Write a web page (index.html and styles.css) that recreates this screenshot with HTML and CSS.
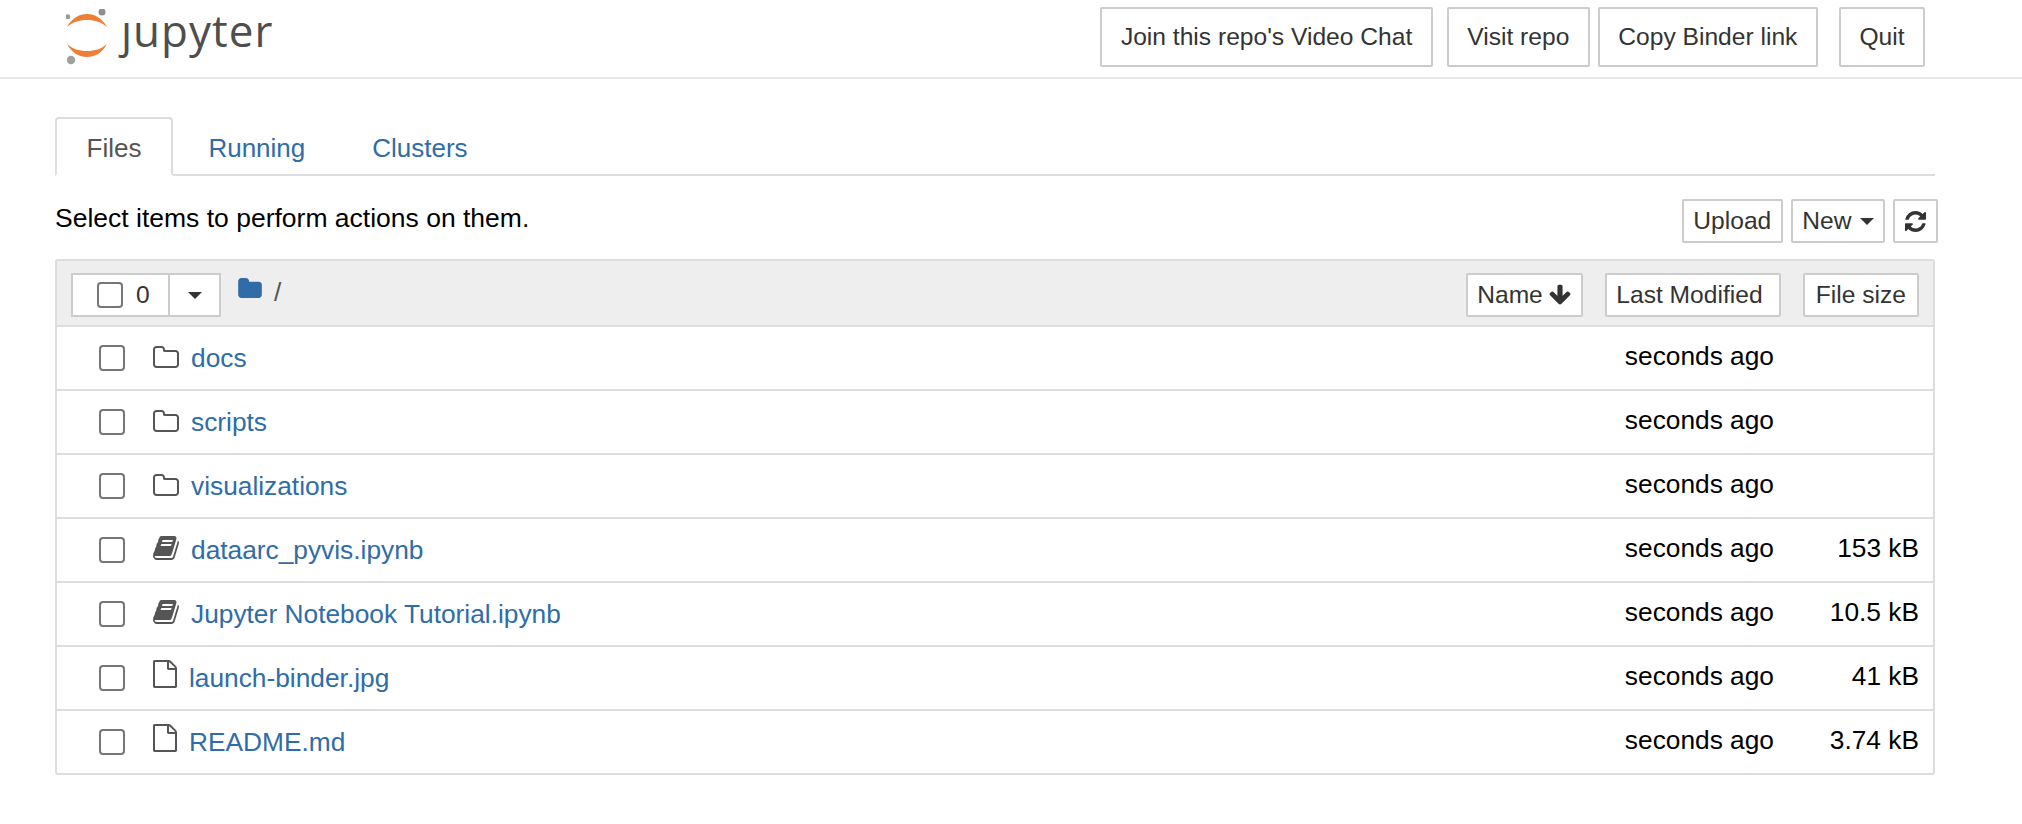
FILE: index.html
```html
<!DOCTYPE html>
<html lang="en">
<head>
    <meta charset="UTF-8">
    <title>Home Page - Select or create a notebook</title>
    <link rel="stylesheet" href="styles.css">
</head>
<body>
    <svg class="icon-defs" width="0" height="0">
        <symbol id="i-folder" viewBox="64 128 1664 1408"><path d="M1600 1312v-704q0-40-28-68t-68-28h-704q-40 0-68-28t-28-68v-64q0-40-28-68t-68-28h-320q-40 0-68 28t-28 68v960q0 40 28 68t68 28h1216q40 0 68-28t28-68zm128-704v704q0 92-66 158t-158 66h-1216q-92 0-158-66t-66-158v-960q0-92 66-158t158-66h320q92 0 158 66t66 158v32h672q92 0 158 66t66 158z" fill="currentColor"/></symbol>
        <symbol id="i-book" viewBox="0 0 1792 1792"><path d="M1703 478q40 57 18 129l-275 906q-19 64-76.500 107.500t-122.500 43.500h-923q-77 0-148.500-53.500t-99.500-131.500q-24-67-2-127 0-4 3-27t4-37q1-8-3-21.500t-3-19.500q2-11 8-21t16.500-23.500 16.500-23.500q23-38 45-91.500t30-91.500q3-10 .5-30t-.5-28q3-11 17-28t17-23q21-36 42-92t25-90q1-9-2.500-32t.5-28q4-13 22-30.500t22-22.500q19-26 42.500-84.500t27.500-96.500q1-8-3-25.500t-2-26.500q2-8 9-18t18-23 17-21q8-12 16.500-30.500t15-35 16-36 19.500-32 26.500-23.500 36-11.500 47.500 5.500l-1 3q38-9 51-9h761q74 0 114 56t18 130l-274 906q-36 119-71.500 153.500t-128.500 34.500h-869q-27 0-38 15-11 16-1 43 24 70 144 70h923q29 0 56-15.500t35-41.500l300-987q7-22 5-57 38 15 59 43zm-1064 2q-4 13 2 22.500t20 9.500h608q13 0 25.500-9.500t16.500-22.500l21-64q4-13-2-22.500t-20-9.500h-608q-13 0-25.500 9.500t-16.500 22.500zm-83 256q-4 13 2 22.500t20 9.500h608q13 0 25.500-9.500t16.500-22.500l21-64q4-13-2-22.500t-20-9.500h-608q-13 0-25.500 9.500t-16.500 22.500z" fill="currentColor"/></symbol>
        <symbol id="i-file" viewBox="128 0 1536 1792"><path d="M1596 380q28 28 48 76t20 88v1152q0 40-28 68t-68 28h-1344q-40 0-68-28t-28-68v-1600q0-40 28-68t68-28h896q40 0 88 20t76 48zm-444-244v376h376q-10-29-22-41l-313-313q-12-12-41-22zm384 1528v-1024h-416q-40 0-68-28t-28-68v-416h-768v1536h1280z" fill="currentColor"/></symbol>
    </svg>

    <header class="site-header">
        <a class="logo" href="#">
            <svg class="logo-mark" viewBox="0 0 46 56" width="46" height="56">
                <circle cx="1.700" cy="7.700" r="2.500" fill="#9a9a9a"/>
                <circle cx="36" cy="3" r="3.500" fill="#8e8e8e"/>
                <circle cx="5" cy="51" r="4.200" fill="#a0a0a0"/>
                <path d="M1 18C6 9 13 5 21 5S36 9 41 18C35 13 29 11 21 11S7 13 1 18z" fill="#ee7f37"/>
                <path d="M1 35C6 44 13 48 21 48s15-4 20-13C35 40 29 42 21 42S7 40 1 35z" fill="#ee7f37"/>
            </svg>
            <span class="logo-word">ȷupyter</span>
        </a>
        <nav class="header-actions">
            <a class="btn btn-header btn-chat" href="#">Join this repo's Video Chat</a>
            <a class="btn btn-header" href="#">Visit repo</a>
            <a class="btn btn-header btn-copy" href="#">Copy Binder link</a>
            <a class="btn btn-header" href="#">Quit</a>
        </nav>
    </header>

    <main class="container">
        <ul class="tabs">
            <li class="tab active"><a href="#">Files</a></li>
            <li class="tab"><a href="#">Running</a></li>
            <li class="tab"><a href="#">Clusters</a></li>
        </ul>

        <div class="tools">
            <span class="tools-hint">Select items to perform actions on them.</span>
            <div class="tool-buttons">
                <button class="btn btn-sm">Upload</button>
                <button class="btn btn-sm">New <span class="caret caret-sm"></span></button>
                <button class="btn btn-sm btn-refresh" aria-label="Refresh">
                    <svg viewBox="128 128 1536 1536" width="21" height="21"><path d="M1639 1056q0 5-1 7-64 268-268 434.500t-478 166.500q-146 0-282.500-55t-243.500-157l-129 129q-19 19-45 19t-45-19-19-45v-448q0-26 19-45t45-19h448q26 0 45 19t19 45-19 45l-137 137q71 66 161 102t187 36q134 0 250-65t186-179q11-17 53-117 8-23 30-23h192q13 0 22.500 9.500t9.500 22.500zm25-800v448q0 26-19 45t-45 19h-448q-26 0-45-19t-19-45 19-45l138-138q-148-137-349-137-134 0-250 65t-186 179q-11 17-53 117-8 23-30 23h-199q-13 0-22.500-9.500t-9.500-22.500v-7q65-268 270-434.500t480-166.500q146 0 284 55.500t245 156.500l130-129q19-19 45-19t45 19 19 45z" fill="#333"/></svg>
                </button>
            </div>
        </div>

        <section class="file-list">
            <div class="list-head">
                <div class="select-group">
                    <label class="select-all"><span class="check"></span><span>0</span></label>
                    <span class="select-menu"><span class="caret"></span></span>
                </div>
                <svg class="head-folder" viewBox="64 128 1664 1408" width="24" height="20"><path d="M1728 608v704q0 92-66 158t-158 66h-1216q-92 0-158-66t-66-158v-960q0-92 66-158t158-66h320q92 0 158 66t66 158v32h672q92 0 158 66t66 158z" fill="#2f6ca8"/></svg>
                <span class="crumb">/</span>
                <div class="sort-buttons">
                    <button class="btn btn-sm btn-name">Name
                        <svg viewBox="0 0 1792 1792" width="24" height="24"><path d="M1675 832q0 53-37 90l-651 652q-39 37-91 37-53 0-90-37l-651-652q-38-36-38-90 0-53 38-91l74-75q39-37 91-37 53 0 90 37l294 294v-704q0-52 38-90t90-38h128q52 0 90 38t38 90v704l294-294q37-37 90-37 52 0 91 37l75 75q37 39 37 91z" fill="#333"/></svg>
                    </button>
                    <button class="btn btn-sm btn-modified">Last Modified</button>
                    <button class="btn btn-sm btn-size">File size</button>
                </div>
            </div>

            <div class="row">
                <span class="check"></span>
                <svg class="row-icon"><use href="#i-folder"/></svg>
                <a class="row-name" href="#">docs</a>
                <span class="row-date">seconds ago</span>
                <span class="row-size"></span>
            </div>
            <div class="row">
                <span class="check"></span>
                <svg class="row-icon"><use href="#i-folder"/></svg>
                <a class="row-name" href="#">scripts</a>
                <span class="row-date">seconds ago</span>
                <span class="row-size"></span>
            </div>
            <div class="row">
                <span class="check"></span>
                <svg class="row-icon"><use href="#i-folder"/></svg>
                <a class="row-name" href="#">visualizations</a>
                <span class="row-date">seconds ago</span>
                <span class="row-size"></span>
            </div>
            <div class="row">
                <span class="check"></span>
                <svg class="row-icon icon-book"><use href="#i-book"/></svg>
                <a class="row-name" href="#">dataarc_pyvis.ipynb</a>
                <span class="row-date">seconds ago</span>
                <span class="row-size">153 kB</span>
            </div>
            <div class="row">
                <span class="check"></span>
                <svg class="row-icon icon-book"><use href="#i-book"/></svg>
                <a class="row-name" href="#">Jupyter Notebook Tutorial.ipynb</a>
                <span class="row-date">seconds ago</span>
                <span class="row-size">10.5 kB</span>
            </div>
            <div class="row">
                <span class="check"></span>
                <svg class="row-icon icon-file"><use href="#i-file"/></svg>
                <a class="row-name" href="#">launch-binder.jpg</a>
                <span class="row-date">seconds ago</span>
                <span class="row-size">41 kB</span>
            </div>
            <div class="row">
                <span class="check"></span>
                <svg class="row-icon icon-file"><use href="#i-file"/></svg>
                <a class="row-name" href="#">README.md</a>
                <span class="row-date">seconds ago</span>
                <span class="row-size">3.74 kB</span>
            </div>
        </section>
    </main>
</body>
</html>
```

FILE: styles.css
```css
* {
    box-sizing: border-box;
}

body {
    margin: 0;
    font-family: "Liberation Sans", Arial, sans-serif;
    font-size: 26.3px;
    color: #000;
    background-color: #fff;
}

a {
    color: #2f6ca8;
    text-decoration: none;
}

.icon-defs {
    position: absolute;
}

/* Header */
.site-header {
    display: flex;
    justify-content: space-between;
    height: 79px;
    padding: 7px 97px 0 66px;
    border-bottom: 2px solid #e7e7e7;
}

.logo {
    display: flex;
    align-items: flex-start;
}

.logo-mark {
    margin-top: 2px;
}

.logo-word {
    margin: -7px 0 0 9px;
    font-family: "Open Sans", sans-serif;
    font-size: 44px;
    color: #4e4e4e;
    letter-spacing: 1px;
}

.header-actions {
    display: flex;
    gap: 8px;
}

.btn {
    display: inline-flex;
    align-items: center;
    justify-content: center;
    font-family: inherit;
    font-size: 24.6px;
    color: #333;
    background-color: #fff;
    border: 2px solid #ccc;
    border-radius: 2px;
}

.btn-header {
    height: 60px;
    padding: 0 18.5px;
}

.btn-chat {
    margin-right: 6px;
}

.btn-copy {
    margin-right: 13px;
}

/* Tabs */
.container {
    width: 1880px;
    margin: 0 0 0 55px;
    padding-top: 38px;
}

.tabs {
    display: flex;
    gap: 4px;
    height: 59px;
    margin: 0;
    padding: 0;
    list-style: none;
    border-bottom: 2px solid #ddd;
}

.tab a {
    display: block;
    height: 59px;
    padding: 14px 29.5px;
    font-size: 26px;
    border: 2px solid transparent;
    border-radius: 4px 4px 0 0;
}

.tab.active a {
    color: #555;
    background-color: #fff;
    border-color: #ddd #ddd #fff;
}

/* Tools above the list */
.tools {
    display: flex;
    justify-content: space-between;
    height: 83px;
    padding-top: 27px;
}

.tools-hint {
    font-size: 26.5px;
}

.tool-buttons {
    display: flex;
    gap: 8px;
    margin-top: -4px;
    margin-right: -3px;
}

.btn-sm {
    height: 44px;
    padding: 0 9.5px;
}

.btn-refresh {
    width: 45px;
    padding: 0;
}

.caret {
    display: inline-block;
    border-top: 7px solid #333;
    border-left: 7px solid transparent;
    border-right: 7px solid transparent;
}

.caret-sm {
    margin-left: 8px;
}

/* File list */
.file-list {
    border: 2px solid #ddd;
    border-radius: 3px;
}

.list-head {
    display: flex;
    align-items: center;
    height: 66px;
    padding: 4px 14px 0;
    background-color: #eee;
    border-bottom: 2px solid #ddd;
}

.select-group {
    display: flex;
    height: 44px;
    background-color: #fff;
    border: 2px solid #ccc;
    color: #333;
    font-size: 24.6px;
}

.select-all {
    display: flex;
    align-items: center;
    gap: 13px;
    width: 97px;
    padding-left: 24px;
    border-right: 2px solid #ccc;
}

.select-menu {
    display: flex;
    align-items: center;
    justify-content: center;
    width: 49px;
}

.check {
    flex: none;
    width: 26px;
    height: 26px;
    background-color: #fff;
    border: 2px solid #767676;
    border-radius: 4px;
}

.head-folder {
    margin: -14px 0 0 17px;
}

.crumb {
    margin: -6px 0 0 12px;
    color: #555;
}

.sort-buttons {
    display: flex;
    gap: 22px;
    margin-left: auto;
}

.sort-buttons svg {
    margin-left: 5px;
}

.btn-name {
    padding: 0 9px;
}

.btn-modified {
    min-width: 176px;
    justify-content: flex-start;
}

.btn-size {
    padding: 0 11px;
}

.row {
    display: flex;
    align-items: center;
    height: 64px;
    padding: 0 14px 0 42px;
    border-bottom: 2px solid #ddd;
}

.row:last-child {
    height: 62px;
    border-bottom: none;
}

.row-icon {
    flex: none;
    width: 26px;
    height: 22px;
    margin: -2px 0 0 28px;
    color: #555;
}

.row-name {
    margin-left: 12px;
}

.icon-book {
    width: 28px;
    height: 28px;
    margin: -4px 0 0 27px;
}

.icon-book + .row-name {
    margin-left: 11px;
}

.icon-file {
    width: 24px;
    height: 28px;
    margin-top: -8px;
}

.row-date {
    margin: -4px 0 0 auto;
}

.row-size {
    width: 145px;
    margin-top: -4px;
    text-align: right;
}
```
